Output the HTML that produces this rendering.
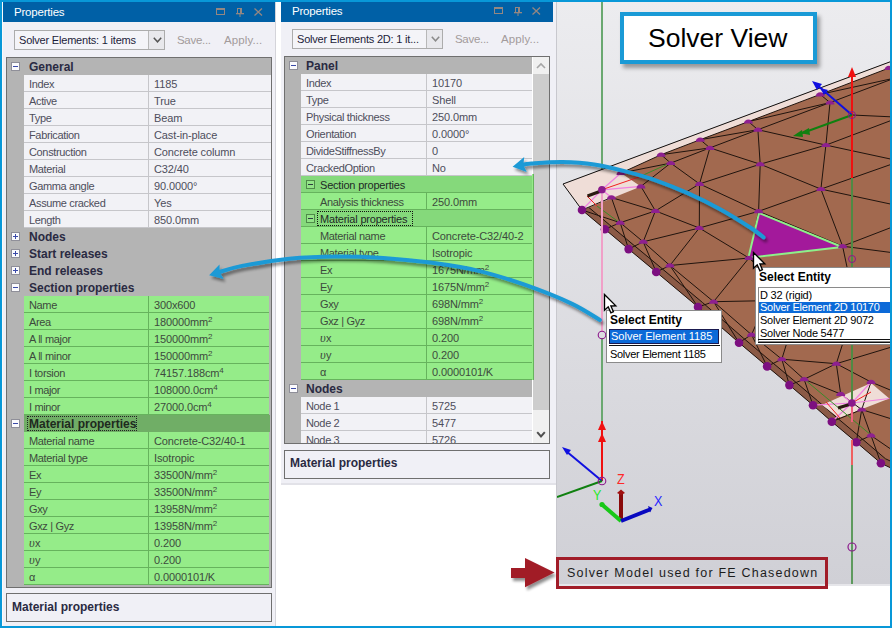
<!DOCTYPE html><html><head><meta charset="utf-8"><style>
*{margin:0;padding:0;box-sizing:border-box}
html,body{width:892px;height:628px;overflow:hidden;background:#0898d8;font-family:"Liberation Sans",sans-serif;font-size:11px}
div,span{position:absolute;white-space:nowrap}
.title{height:20px;background:#0060a6;color:#fff;font-size:11.5px;line-height:20px;letter-spacing:-0.2px}
.combo{height:20px;border:1px solid #acacac;background:#f4f4f8;color:#1c1c3a;line-height:18px;font-size:11px;letter-spacing:-0.2px;overflow:hidden}
.btn{top:0;width:16px;height:18px;border-left:1px solid #b8b8b8;background:#e8e8ec}
.tb{color:#a39b9b;font-size:11.5px;letter-spacing:-0.3px;line-height:13px}
.grid{border:1px solid #6f6f6f;background:#b4b4b4;overflow:hidden}
.hdr{font-weight:bold;color:#2a2a42;font-size:12px;line-height:17px;margin-top:1px}
.lbl{color:#4e4e5c;font-size:11px;letter-spacing:-0.35px;line-height:17px;margin-top:1px}
.glbl{color:#3d4a3d;font-size:11px;letter-spacing:-0.35px;line-height:17px;margin-top:1px}
.box{width:9px;height:9px;border:1px solid #8f8f99;background:#fbfbfd}
.box:after{content:"";position:absolute;left:1px;top:3px;width:5px;height:1px;background:#3a4aa8}
.box.plus:before{content:"";position:absolute;left:3px;top:1px;width:1px;height:5px;background:#3a4aa8}
.gbox{width:9px;height:9px;border:1px solid #4f8a4a;background:#92e487}
.gbox:after{content:"";position:absolute;left:1px;top:3px;width:5px;height:1px;background:#2c3c40}
.desc{border:1px solid #6f6f6f;background:#f0f0f6;font-weight:bold;color:#2a2a42;font-size:12px;line-height:14px}
.pop{background:#fff;border:1px solid #8a8a8a;color:#000}
sup{font-size:8px;vertical-align:0;position:relative;top:-4px}
</style></head><body>
<div style="left:2px;top:2px;width:274px;height:624px;background:#f0f0f6;border-left:1px solid #fafafa;border-right:1px solid #d4d4da"></div>
<div class="title" style="left:3px;top:2px;width:272px"><span style="left:11px;top:0">Properties</span></div>
<svg style="position:absolute;left:216px;top:7px" width="50" height="10" viewBox="0 0 50 10"><rect x="0.5" y="1.5" width="8" height="6" fill="none" stroke="#948782" stroke-width="1"/><rect x="0" y="1" width="9" height="2" fill="#948782"/><rect x="21.5" y="1.5" width="4" height="5" fill="none" stroke="#948782"/><rect x="24" y="1" width="1" height="5" fill="#948782"/><rect x="20" y="6" width="8" height="1.3" fill="#948782"/><rect x="23.5" y="7" width="1" height="3" fill="#948782"/><path d="M38.5 1.5 L46 8.5 M46 1.5 L38.5 8.5" stroke="#948782" stroke-width="1.3"/></svg>
<div class="combo" style="left:14px;top:30px;width:151px"><span style="left:4px;top:0">Solver Elements: 1 items</span><div class="btn" style="left:133px"><svg style="position:absolute;left:4px;top:6px" width="9" height="6"><path d="M0.8 0.8 L4.5 4.8 L8.2 0.8" fill="none" stroke="#555" stroke-width="1.5"/></svg></div></div>
<span class="tb" style="left:177px;top:34px">Save...</span>
<span class="tb" style="left:224px;top:34px;letter-spacing:0.1px">Apply...</span>
<div class="grid" style="left:6px;top:57px;width:266px;height:531px"></div>
<div style="left:0;top:0;width:892px;height:628px;overflow:hidden">
<div style="left:7px;top:58px;width:264px;height:529px;overflow:hidden">
<div class="box" style="left:4px;top:4px"></div>
<span class="hdr" style="left:22px;top:0px">General</span>
<div style="left:17px;top:17px;width:247px;height:17px;background:#f2f2f6;border-bottom:1px solid #c6c6ca"></div>
<div style="left:141px;top:17px;width:1px;height:17px;background:#c6c6ca"></div>
<span class="lbl" style="left:22px;top:17px">Index</span>
<span class="lbl" style="left:147px;top:17px;letter-spacing:-0.12px">1185</span>
<div style="left:17px;top:34px;width:247px;height:17px;background:#f2f2f6;border-bottom:1px solid #c6c6ca"></div>
<div style="left:141px;top:34px;width:1px;height:17px;background:#c6c6ca"></div>
<span class="lbl" style="left:22px;top:34px">Active</span>
<span class="lbl" style="left:147px;top:34px;letter-spacing:-0.12px">True</span>
<div style="left:17px;top:51px;width:247px;height:17px;background:#f2f2f6;border-bottom:1px solid #c6c6ca"></div>
<div style="left:141px;top:51px;width:1px;height:17px;background:#c6c6ca"></div>
<span class="lbl" style="left:22px;top:51px">Type</span>
<span class="lbl" style="left:147px;top:51px;letter-spacing:-0.12px">Beam</span>
<div style="left:17px;top:68px;width:247px;height:17px;background:#f2f2f6;border-bottom:1px solid #c6c6ca"></div>
<div style="left:141px;top:68px;width:1px;height:17px;background:#c6c6ca"></div>
<span class="lbl" style="left:22px;top:68px">Fabrication</span>
<span class="lbl" style="left:147px;top:68px;letter-spacing:-0.12px">Cast-in-place</span>
<div style="left:17px;top:85px;width:247px;height:17px;background:#f2f2f6;border-bottom:1px solid #c6c6ca"></div>
<div style="left:141px;top:85px;width:1px;height:17px;background:#c6c6ca"></div>
<span class="lbl" style="left:22px;top:85px">Construction</span>
<span class="lbl" style="left:147px;top:85px;letter-spacing:-0.12px">Concrete column</span>
<div style="left:17px;top:102px;width:247px;height:17px;background:#f2f2f6;border-bottom:1px solid #c6c6ca"></div>
<div style="left:141px;top:102px;width:1px;height:17px;background:#c6c6ca"></div>
<span class="lbl" style="left:22px;top:102px">Material</span>
<span class="lbl" style="left:147px;top:102px;letter-spacing:-0.12px">C32/40</span>
<div style="left:17px;top:119px;width:247px;height:17px;background:#f2f2f6;border-bottom:1px solid #c6c6ca"></div>
<div style="left:141px;top:119px;width:1px;height:17px;background:#c6c6ca"></div>
<span class="lbl" style="left:22px;top:119px">Gamma angle</span>
<span class="lbl" style="left:147px;top:119px;letter-spacing:-0.12px">90.0000°</span>
<div style="left:17px;top:136px;width:247px;height:17px;background:#f2f2f6;border-bottom:1px solid #c6c6ca"></div>
<div style="left:141px;top:136px;width:1px;height:17px;background:#c6c6ca"></div>
<span class="lbl" style="left:22px;top:136px">Assume cracked</span>
<span class="lbl" style="left:147px;top:136px;letter-spacing:-0.12px">Yes</span>
<div style="left:17px;top:153px;width:247px;height:17px;background:#f2f2f6;border-bottom:1px solid #c6c6ca"></div>
<div style="left:141px;top:153px;width:1px;height:17px;background:#c6c6ca"></div>
<span class="lbl" style="left:22px;top:153px">Length</span>
<span class="lbl" style="left:147px;top:153px;letter-spacing:-0.12px">850.0mm</span>
<div class="box plus" style="left:4px;top:174px"></div>
<span class="hdr" style="left:22px;top:170px">Nodes</span>
<div class="box plus" style="left:4px;top:191px"></div>
<span class="hdr" style="left:22px;top:187px">Start releases</span>
<div class="box plus" style="left:4px;top:208px"></div>
<span class="hdr" style="left:22px;top:204px">End releases</span>
<div class="box" style="left:4px;top:225px"></div>
<span class="hdr" style="left:22px;top:221px">Section properties</span>
<div style="left:17px;top:238px;width:245px;height:17px;background:#95ec89;border-bottom:1px solid #66b35d"></div>
<div style="left:141px;top:238px;width:1px;height:17px;background:#66b35d"></div>
<span class="glbl" style="left:22px;top:238px">Name</span>
<span class="glbl" style="left:147px;top:238px;letter-spacing:-0.12px">300x600</span>
<div style="left:17px;top:255px;width:245px;height:17px;background:#95ec89;border-bottom:1px solid #66b35d"></div>
<div style="left:141px;top:255px;width:1px;height:17px;background:#66b35d"></div>
<span class="glbl" style="left:22px;top:255px">Area</span>
<span class="glbl" style="left:147px;top:255px;letter-spacing:-0.12px">180000mm<sup>2</sup></span>
<div style="left:17px;top:272px;width:245px;height:17px;background:#95ec89;border-bottom:1px solid #66b35d"></div>
<div style="left:141px;top:272px;width:1px;height:17px;background:#66b35d"></div>
<span class="glbl" style="left:22px;top:272px">A ǁ major</span>
<span class="glbl" style="left:147px;top:272px;letter-spacing:-0.12px">150000mm<sup>2</sup></span>
<div style="left:17px;top:289px;width:245px;height:17px;background:#95ec89;border-bottom:1px solid #66b35d"></div>
<div style="left:141px;top:289px;width:1px;height:17px;background:#66b35d"></div>
<span class="glbl" style="left:22px;top:289px">A ǁ minor</span>
<span class="glbl" style="left:147px;top:289px;letter-spacing:-0.12px">150000mm<sup>2</sup></span>
<div style="left:17px;top:306px;width:245px;height:17px;background:#95ec89;border-bottom:1px solid #66b35d"></div>
<div style="left:141px;top:306px;width:1px;height:17px;background:#66b35d"></div>
<span class="glbl" style="left:22px;top:306px">I torsion</span>
<span class="glbl" style="left:147px;top:306px;letter-spacing:-0.12px">74157.188cm<sup>4</sup></span>
<div style="left:17px;top:323px;width:245px;height:17px;background:#95ec89;border-bottom:1px solid #66b35d"></div>
<div style="left:141px;top:323px;width:1px;height:17px;background:#66b35d"></div>
<span class="glbl" style="left:22px;top:323px">I major</span>
<span class="glbl" style="left:147px;top:323px;letter-spacing:-0.12px">108000.0cm<sup>4</sup></span>
<div style="left:17px;top:340px;width:245px;height:17px;background:#95ec89;border-bottom:1px solid #66b35d"></div>
<div style="left:141px;top:340px;width:1px;height:17px;background:#66b35d"></div>
<span class="glbl" style="left:22px;top:340px">I minor</span>
<span class="glbl" style="left:147px;top:340px;letter-spacing:-0.12px">27000.0cm<sup>4</sup></span>
<div style="left:17px;top:357px;width:246px;height:17px;background:#70ae66"></div>
<div class="box" style="left:4px;top:361px"></div>
<div style="left:20px;top:358px;width:110px;height:15px;border:1px dotted #222"></div>
<span class="hdr" style="left:22px;top:357px;color:#1e2a1e">Material properties</span>
<div style="left:17px;top:374px;width:245px;height:17px;background:#95ec89;border-bottom:1px solid #66b35d"></div>
<div style="left:141px;top:374px;width:1px;height:17px;background:#66b35d"></div>
<span class="glbl" style="left:22px;top:374px">Material name</span>
<span class="glbl" style="left:147px;top:374px;letter-spacing:-0.12px">Concrete-C32/40-1</span>
<div style="left:17px;top:391px;width:245px;height:17px;background:#95ec89;border-bottom:1px solid #66b35d"></div>
<div style="left:141px;top:391px;width:1px;height:17px;background:#66b35d"></div>
<span class="glbl" style="left:22px;top:391px">Material type</span>
<span class="glbl" style="left:147px;top:391px;letter-spacing:-0.12px">Isotropic</span>
<div style="left:17px;top:408px;width:245px;height:17px;background:#95ec89;border-bottom:1px solid #66b35d"></div>
<div style="left:141px;top:408px;width:1px;height:17px;background:#66b35d"></div>
<span class="glbl" style="left:22px;top:408px">Ex</span>
<span class="glbl" style="left:147px;top:408px;letter-spacing:-0.12px">33500N/mm<sup>2</sup></span>
<div style="left:17px;top:425px;width:245px;height:17px;background:#95ec89;border-bottom:1px solid #66b35d"></div>
<div style="left:141px;top:425px;width:1px;height:17px;background:#66b35d"></div>
<span class="glbl" style="left:22px;top:425px">Ey</span>
<span class="glbl" style="left:147px;top:425px;letter-spacing:-0.12px">33500N/mm<sup>2</sup></span>
<div style="left:17px;top:442px;width:245px;height:17px;background:#95ec89;border-bottom:1px solid #66b35d"></div>
<div style="left:141px;top:442px;width:1px;height:17px;background:#66b35d"></div>
<span class="glbl" style="left:22px;top:442px">Gxy</span>
<span class="glbl" style="left:147px;top:442px;letter-spacing:-0.12px">13958N/mm<sup>2</sup></span>
<div style="left:17px;top:459px;width:245px;height:17px;background:#95ec89;border-bottom:1px solid #66b35d"></div>
<div style="left:141px;top:459px;width:1px;height:17px;background:#66b35d"></div>
<span class="glbl" style="left:22px;top:459px">Gxz | Gyz</span>
<span class="glbl" style="left:147px;top:459px;letter-spacing:-0.12px">13958N/mm<sup>2</sup></span>
<div style="left:17px;top:476px;width:245px;height:17px;background:#95ec89;border-bottom:1px solid #66b35d"></div>
<div style="left:141px;top:476px;width:1px;height:17px;background:#66b35d"></div>
<span class="glbl" style="left:22px;top:476px"><i style="font-family:'Liberation Serif',serif;font-size:12.5px;letter-spacing:0.3px">υ</i>x</span>
<span class="glbl" style="left:147px;top:476px;letter-spacing:-0.12px">0.200</span>
<div style="left:17px;top:493px;width:245px;height:17px;background:#95ec89;border-bottom:1px solid #66b35d"></div>
<div style="left:141px;top:493px;width:1px;height:17px;background:#66b35d"></div>
<span class="glbl" style="left:22px;top:493px"><i style="font-family:'Liberation Serif',serif;font-size:12.5px;letter-spacing:0.3px">υ</i>y</span>
<span class="glbl" style="left:147px;top:493px;letter-spacing:-0.12px">0.200</span>
<div style="left:17px;top:510px;width:245px;height:17px;background:#95ec89;border-bottom:1px solid #66b35d"></div>
<div style="left:141px;top:510px;width:1px;height:17px;background:#66b35d"></div>
<span class="glbl" style="left:22px;top:510px">α</span>
<span class="glbl" style="left:147px;top:510px;letter-spacing:-0.12px">0.0000101/K</span>
</div></div>
<div class="desc" style="left:6px;top:593px;width:266px;height:29px"><span style="left:5px;top:6px">Material properties</span></div>
<div style="left:276px;top:2px;width:5px;height:624px;background:#fff"></div>
<div style="left:281px;top:2px;width:276px;height:483px;background:#f0f0f6;border-right:1px solid #d4d4da;border-bottom:2px solid #e2e2e8"></div>
<div style="left:281px;top:485px;width:276px;height:141px;background:#fff"></div>
<div class="title" style="left:281px;top:2px;width:272px"><span style="left:11px;top:-1px">Properties</span></div>
<svg style="position:absolute;left:494px;top:6px" width="50" height="10" viewBox="0 0 50 10"><rect x="0.5" y="1.5" width="8" height="6" fill="none" stroke="#948782" stroke-width="1"/><rect x="0" y="1" width="9" height="2" fill="#948782"/><rect x="21.5" y="1.5" width="4" height="5" fill="none" stroke="#948782"/><rect x="24" y="1" width="1" height="5" fill="#948782"/><rect x="20" y="6" width="8" height="1.3" fill="#948782"/><rect x="23.5" y="7" width="1" height="3" fill="#948782"/><path d="M38.5 1.5 L46 8.5 M46 1.5 L38.5 8.5" stroke="#948782" stroke-width="1.3"/></svg>
<div class="combo" style="left:292px;top:29px;width:151px"><span style="left:4px;top:0">Solver Elements 2D: 1 it...</span><div class="btn" style="left:133px"><svg style="position:absolute;left:4px;top:6px" width="9" height="6"><path d="M0.8 0.8 L4.5 4.8 L8.2 0.8" fill="none" stroke="#8a8a8a" stroke-width="1.5"/></svg></div></div>
<span class="tb" style="left:455px;top:33px">Save...</span>
<span class="tb" style="left:501px;top:33px;letter-spacing:0.1px">Apply...</span>
<div class="grid" style="left:284px;top:56px;width:266px;height:388px"></div>
<div style="left:285px;top:57px;width:247px;height:386px;overflow:hidden">
<div class="box" style="left:4px;top:4px"></div>
<span class="hdr" style="left:21px;top:0px">Panel</span>
<div style="left:16px;top:17px;width:231px;height:17px;background:#f2f2f6;border-bottom:1px solid #c6c6ca"></div>
<div style="left:141px;top:17px;width:1px;height:17px;background:#c6c6ca"></div>
<span class="lbl" style="left:21px;top:17px">Index</span>
<span class="lbl" style="left:147px;top:17px;letter-spacing:-0.12px">10170</span>
<div style="left:16px;top:34px;width:231px;height:17px;background:#f2f2f6;border-bottom:1px solid #c6c6ca"></div>
<div style="left:141px;top:34px;width:1px;height:17px;background:#c6c6ca"></div>
<span class="lbl" style="left:21px;top:34px">Type</span>
<span class="lbl" style="left:147px;top:34px;letter-spacing:-0.12px">Shell</span>
<div style="left:16px;top:51px;width:231px;height:17px;background:#f2f2f6;border-bottom:1px solid #c6c6ca"></div>
<div style="left:141px;top:51px;width:1px;height:17px;background:#c6c6ca"></div>
<span class="lbl" style="left:21px;top:51px">Physical thickness</span>
<span class="lbl" style="left:147px;top:51px;letter-spacing:-0.12px">250.0mm</span>
<div style="left:16px;top:68px;width:231px;height:17px;background:#f2f2f6;border-bottom:1px solid #c6c6ca"></div>
<div style="left:141px;top:68px;width:1px;height:17px;background:#c6c6ca"></div>
<span class="lbl" style="left:21px;top:68px">Orientation</span>
<span class="lbl" style="left:147px;top:68px;letter-spacing:-0.12px">0.0000°</span>
<div style="left:16px;top:85px;width:231px;height:17px;background:#f2f2f6;border-bottom:1px solid #c6c6ca"></div>
<div style="left:141px;top:85px;width:1px;height:17px;background:#c6c6ca"></div>
<span class="lbl" style="left:21px;top:85px">DivideStiffnessBy</span>
<span class="lbl" style="left:147px;top:85px;letter-spacing:-0.12px">0</span>
<div style="left:16px;top:102px;width:231px;height:17px;background:#f2f2f6;border-bottom:1px solid #c6c6ca"></div>
<div style="left:141px;top:102px;width:1px;height:17px;background:#c6c6ca"></div>
<span class="lbl" style="left:21px;top:102px">CrackedOption</span>
<span class="lbl" style="left:147px;top:102px;letter-spacing:-0.12px">No</span>
<div style="left:16px;top:119px;width:231px;height:17px;background:#85d97b;border-bottom:1px solid #66b35d"></div>
<div class="gbox" style="left:21px;top:123px"></div>
<span class="glbl" style="left:35px;top:119px;color:#1e2a26;letter-spacing:-0.2px">Section properties</span>
<div style="left:16px;top:136px;width:231px;height:17px;background:#95ec89;border-bottom:1px solid #66b35d"></div>
<div style="left:141px;top:136px;width:1px;height:17px;background:#66b35d"></div>
<span class="glbl" style="left:35px;top:136px">Analysis thickness</span>
<span class="glbl" style="left:147px;top:136px;letter-spacing:-0.12px">250.0mm</span>
<div style="left:16px;top:153px;width:231px;height:17px;background:#85d97b;border-bottom:1px solid #66b35d"></div>
<div class="gbox" style="left:21px;top:157px"></div>
<div style="left:32px;top:154px;width:96px;height:15px;border:1px dotted #111"></div>
<span class="glbl" style="left:35px;top:153px;color:#1e2a26;letter-spacing:-0.2px">Material properties</span>
<div style="left:16px;top:170px;width:231px;height:17px;background:#95ec89;border-bottom:1px solid #66b35d"></div>
<div style="left:141px;top:170px;width:1px;height:17px;background:#66b35d"></div>
<span class="glbl" style="left:35px;top:170px">Material name</span>
<span class="glbl" style="left:147px;top:170px;letter-spacing:-0.12px">Concrete-C32/40-2</span>
<div style="left:16px;top:187px;width:231px;height:17px;background:#95ec89;border-bottom:1px solid #66b35d"></div>
<div style="left:141px;top:187px;width:1px;height:17px;background:#66b35d"></div>
<span class="glbl" style="left:35px;top:187px">Material type</span>
<span class="glbl" style="left:147px;top:187px;letter-spacing:-0.12px">Isotropic</span>
<div style="left:16px;top:204px;width:231px;height:17px;background:#95ec89;border-bottom:1px solid #66b35d"></div>
<div style="left:141px;top:204px;width:1px;height:17px;background:#66b35d"></div>
<span class="glbl" style="left:35px;top:204px">Ex</span>
<span class="glbl" style="left:147px;top:204px;letter-spacing:-0.12px">1675N/mm<sup>2</sup></span>
<div style="left:16px;top:221px;width:231px;height:17px;background:#95ec89;border-bottom:1px solid #66b35d"></div>
<div style="left:141px;top:221px;width:1px;height:17px;background:#66b35d"></div>
<span class="glbl" style="left:35px;top:221px">Ey</span>
<span class="glbl" style="left:147px;top:221px;letter-spacing:-0.12px">1675N/mm<sup>2</sup></span>
<div style="left:16px;top:238px;width:231px;height:17px;background:#95ec89;border-bottom:1px solid #66b35d"></div>
<div style="left:141px;top:238px;width:1px;height:17px;background:#66b35d"></div>
<span class="glbl" style="left:35px;top:238px">Gxy</span>
<span class="glbl" style="left:147px;top:238px;letter-spacing:-0.12px">698N/mm<sup>2</sup></span>
<div style="left:16px;top:255px;width:231px;height:17px;background:#95ec89;border-bottom:1px solid #66b35d"></div>
<div style="left:141px;top:255px;width:1px;height:17px;background:#66b35d"></div>
<span class="glbl" style="left:35px;top:255px">Gxz | Gyz</span>
<span class="glbl" style="left:147px;top:255px;letter-spacing:-0.12px">698N/mm<sup>2</sup></span>
<div style="left:16px;top:272px;width:231px;height:17px;background:#95ec89;border-bottom:1px solid #66b35d"></div>
<div style="left:141px;top:272px;width:1px;height:17px;background:#66b35d"></div>
<span class="glbl" style="left:35px;top:272px"><i style="font-family:'Liberation Serif',serif;font-size:12.5px;letter-spacing:0.3px">υ</i>x</span>
<span class="glbl" style="left:147px;top:272px;letter-spacing:-0.12px">0.200</span>
<div style="left:16px;top:289px;width:231px;height:17px;background:#95ec89;border-bottom:1px solid #66b35d"></div>
<div style="left:141px;top:289px;width:1px;height:17px;background:#66b35d"></div>
<span class="glbl" style="left:35px;top:289px"><i style="font-family:'Liberation Serif',serif;font-size:12.5px;letter-spacing:0.3px">υ</i>y</span>
<span class="glbl" style="left:147px;top:289px;letter-spacing:-0.12px">0.200</span>
<div style="left:16px;top:306px;width:231px;height:17px;background:#95ec89;border-bottom:1px solid #66b35d"></div>
<div style="left:141px;top:306px;width:1px;height:17px;background:#66b35d"></div>
<span class="glbl" style="left:35px;top:306px">α</span>
<span class="glbl" style="left:147px;top:306px;letter-spacing:-0.12px">0.0000101/K</span>
<div class="box" style="left:4px;top:327px"></div>
<span class="hdr" style="left:21px;top:323px">Nodes</span>
<div style="left:16px;top:340px;width:231px;height:17px;background:#f2f2f6;border-bottom:1px solid #c6c6ca"></div>
<div style="left:141px;top:340px;width:1px;height:17px;background:#c6c6ca"></div>
<span class="lbl" style="left:21px;top:340px">Node 1</span>
<span class="lbl" style="left:147px;top:340px;letter-spacing:-0.12px">5725</span>
<div style="left:16px;top:357px;width:231px;height:17px;background:#f2f2f6;border-bottom:1px solid #c6c6ca"></div>
<div style="left:141px;top:357px;width:1px;height:17px;background:#c6c6ca"></div>
<span class="lbl" style="left:21px;top:357px">Node 2</span>
<span class="lbl" style="left:147px;top:357px;letter-spacing:-0.12px">5477</span>
<div style="left:16px;top:374px;width:231px;height:17px;background:#f2f2f6;border-bottom:1px solid #c6c6ca"></div>
<div style="left:141px;top:374px;width:1px;height:17px;background:#c6c6ca"></div>
<span class="lbl" style="left:21px;top:374px">Node 3</span>
<span class="lbl" style="left:147px;top:374px;letter-spacing:-0.12px">5726</span>
</div>
<div style="left:532px;top:57px;width:17px;height:386px;background:#cdcdcd;border-left:1px solid #fff"></div>
<div style="left:533px;top:57px;width:16px;height:17px;background:#f0f0f0"></div>
<div style="left:533px;top:410px;width:16px;height:33px;background:#f0f0f0"></div>
<svg style="position:absolute;left:536px;top:62px" width="10" height="7"><path d="M1 6 L5 2 L9 6" fill="none" stroke="#a6a6a6" stroke-width="1.6"/></svg>
<svg style="position:absolute;left:536px;top:431px" width="10" height="8"><path d="M1.2 1.2 L5 5.5 L8.8 1.2" fill="none" stroke="#505050" stroke-width="2"/></svg>
<div style="left:532px;top:174px;width:2px;height:206px;background:#95ec89;border-right:1px solid #66b35d"></div>
<div class="desc" style="left:284px;top:450px;width:266px;height:29px"><span style="left:5px;top:5px">Material properties</span></div>
<div style="left:557px;top:2px;width:333px;height:624px;background:#fff"></div>
<div style="left:556px;top:2px;width:1px;height:582px;background:#c8c8ce"></div>
<div style="left:557px;top:2px;width:333px;height:582px;background:linear-gradient(#ececef,#d0d0d6)"></div>
<div style="left:557px;top:584px;width:333px;height:2px;background:#e6e6ea"></div>
<svg style="position:absolute;left:0;top:0" width="892" height="628" viewBox="0 0 892 628">
<defs><clipPath id="vc"><rect x="557" y="2" width="333" height="582"/></clipPath></defs>
<g clip-path="url(#vc)">
<line x1="602" y1="2" x2="602" y2="170" stroke="#6aa870" stroke-width="2"/>
<line x1="852" y1="465" x2="852" y2="584" stroke="#5e9a5e" stroke-width="2"/>
<polygon points="563.0,184.0 895.0,60.0 895.0,470.0 880.9,463.2 856.3,442.2 831.8,421.7 813.0,405.2 789.4,385.1 767.1,366.4 739.0,342.7 698.0,307.0 656.2,272.0 628.6,249.1 604.9,229.2 582.0,210.0" fill="#a2694f"/>
<polygon points="582.0,210.0 604.9,229.2 628.6,249.1 656.2,272.0 698.0,307.0 739.0,342.7 767.1,366.4 789.4,385.1 813.0,405.2 831.8,421.7 856.3,442.2 880.9,463.2 895.0,470.0 899.5,465.5 885.4,458.7 860.8,437.7 836.3,417.2 817.5,400.7 793.9,380.6 771.6,361.9 743.5,338.2 702.5,302.5 660.7,267.5 633.1,244.6 609.4,224.7 586.5,205.5" fill="#8b5a46"/>
<polyline points="586.5,205.5 609.4,224.7 633.1,244.6 660.7,267.5 702.5,302.5 743.5,338.2 771.6,361.9 793.9,380.6 817.5,400.7 836.3,417.2 860.8,437.7 885.4,458.7 899.5,465.5" fill="none" stroke="#1e120c" stroke-width="1"/>
<polygon points="563.0,184.0 895.0,60.0 895.0,66.0 889.0,68.0 820.2,94.4 748.4,121.6 700.2,139.7 661.1,154.7 621.0,173.0 640.9,186.4 590.0,207.0 582.0,210.0" fill="#efddd7"/>
<line x1="563" y1="184" x2="895" y2="60" stroke="#111" stroke-width="1"/>
<line x1="563" y1="184" x2="582" y2="210" stroke="#111" stroke-width="1"/>
<polygon points="822,405 871,383 889.3,398.5 839,418" fill="#efddd7"/>
<line x1="621.0" y1="173.0" x2="661.1" y2="154.7" stroke="#20140e" stroke-width="1"/>
<line x1="661.1" y1="154.7" x2="700.2" y2="139.7" stroke="#20140e" stroke-width="1"/>
<line x1="700.2" y1="139.7" x2="748.4" y2="121.6" stroke="#20140e" stroke-width="1"/>
<line x1="748.4" y1="121.6" x2="820.2" y2="94.4" stroke="#20140e" stroke-width="1"/>
<line x1="820.2" y1="94.4" x2="889.0" y2="68.0" stroke="#20140e" stroke-width="1"/>
<line x1="889.0" y1="68.0" x2="895.0" y2="59.0" stroke="#20140e" stroke-width="1"/>
<line x1="670.7" y1="163.1" x2="709.9" y2="147.9" stroke="#20140e" stroke-width="1"/>
<line x1="709.9" y1="147.9" x2="757.9" y2="129.7" stroke="#20140e" stroke-width="1"/>
<line x1="757.9" y1="129.7" x2="830.0" y2="102.6" stroke="#20140e" stroke-width="1"/>
<line x1="830.0" y1="102.6" x2="895.0" y2="78.0" stroke="#20140e" stroke-width="1"/>
<line x1="661.1" y1="154.7" x2="670.7" y2="163.1" stroke="#20140e" stroke-width="1"/>
<line x1="700.2" y1="139.7" x2="709.9" y2="147.9" stroke="#20140e" stroke-width="1"/>
<line x1="748.4" y1="121.6" x2="757.9" y2="129.7" stroke="#20140e" stroke-width="1"/>
<line x1="820.2" y1="94.4" x2="830.0" y2="102.6" stroke="#20140e" stroke-width="1"/>
<line x1="640.9" y1="186.4" x2="670.7" y2="163.1" stroke="#20140e" stroke-width="1"/>
<line x1="640.9" y1="186.4" x2="655.4" y2="210.9" stroke="#20140e" stroke-width="1"/>
<line x1="611.4" y1="197.5" x2="655.4" y2="210.9" stroke="#20140e" stroke-width="1"/>
<line x1="611.4" y1="197.5" x2="620.2" y2="222.7" stroke="#20140e" stroke-width="1"/>
<line x1="670.7" y1="163.1" x2="699.5" y2="183.9" stroke="#20140e" stroke-width="1"/>
<line x1="709.9" y1="147.9" x2="699.5" y2="183.9" stroke="#20140e" stroke-width="1"/>
<line x1="709.9" y1="147.9" x2="760.2" y2="164.2" stroke="#20140e" stroke-width="1"/>
<line x1="757.9" y1="129.7" x2="760.2" y2="164.2" stroke="#20140e" stroke-width="1"/>
<line x1="757.9" y1="129.7" x2="825.9" y2="145.1" stroke="#20140e" stroke-width="1"/>
<line x1="830.0" y1="102.6" x2="825.9" y2="145.1" stroke="#20140e" stroke-width="1"/>
<line x1="825.9" y1="145.1" x2="895.0" y2="119.0" stroke="#20140e" stroke-width="1"/>
<line x1="825.9" y1="145.1" x2="895.0" y2="160.0" stroke="#20140e" stroke-width="1"/>
<line x1="825.9" y1="145.1" x2="820.9" y2="189.1" stroke="#20140e" stroke-width="1"/>
<line x1="760.2" y1="164.2" x2="825.9" y2="145.1" stroke="#20140e" stroke-width="1"/>
<line x1="760.2" y1="164.2" x2="699.5" y2="183.9" stroke="#20140e" stroke-width="1"/>
<line x1="760.2" y1="164.2" x2="758.6" y2="211.3" stroke="#20140e" stroke-width="1"/>
<line x1="760.2" y1="164.2" x2="820.9" y2="189.1" stroke="#20140e" stroke-width="1"/>
<line x1="699.5" y1="183.9" x2="758.6" y2="211.3" stroke="#20140e" stroke-width="1"/>
<line x1="699.5" y1="183.9" x2="655.4" y2="210.9" stroke="#20140e" stroke-width="1"/>
<line x1="699.5" y1="183.9" x2="699.3" y2="228.0" stroke="#20140e" stroke-width="1"/>
<line x1="820.9" y1="189.1" x2="758.6" y2="211.3" stroke="#20140e" stroke-width="1"/>
<line x1="820.9" y1="189.1" x2="895.0" y2="163.0" stroke="#20140e" stroke-width="1"/>
<line x1="820.9" y1="189.1" x2="895.0" y2="205.0" stroke="#20140e" stroke-width="1"/>
<line x1="820.9" y1="189.1" x2="842.6" y2="246.2" stroke="#20140e" stroke-width="1"/>
<line x1="758.6" y1="211.3" x2="699.3" y2="228.0" stroke="#20140e" stroke-width="1"/>
<line x1="758.6" y1="211.3" x2="842.6" y2="246.2" stroke="#20140e" stroke-width="1"/>
<line x1="758.6" y1="211.3" x2="749.0" y2="258.0" stroke="#20140e" stroke-width="1"/>
<line x1="842.6" y1="246.2" x2="749.0" y2="258.0" stroke="#20140e" stroke-width="1"/>
<line x1="842.6" y1="246.2" x2="895.0" y2="226.0" stroke="#20140e" stroke-width="1"/>
<line x1="842.6" y1="246.2" x2="895.0" y2="253.0" stroke="#20140e" stroke-width="1"/>
<line x1="842.6" y1="246.2" x2="855.0" y2="305.0" stroke="#20140e" stroke-width="1"/>
<line x1="749.0" y1="258.0" x2="775.0" y2="282.0" stroke="#20140e" stroke-width="1"/>
<line x1="749.0" y1="258.0" x2="800.0" y2="300.0" stroke="#20140e" stroke-width="1"/>
<line x1="655.4" y1="210.9" x2="620.2" y2="222.7" stroke="#20140e" stroke-width="1"/>
<line x1="655.4" y1="210.9" x2="699.3" y2="228.0" stroke="#20140e" stroke-width="1"/>
<line x1="655.4" y1="210.9" x2="643.2" y2="241.8" stroke="#20140e" stroke-width="1"/>
<line x1="620.2" y1="222.7" x2="643.2" y2="241.8" stroke="#20140e" stroke-width="1"/>
<line x1="699.3" y1="228.0" x2="643.2" y2="241.8" stroke="#20140e" stroke-width="1"/>
<line x1="699.3" y1="228.0" x2="669.9" y2="265.5" stroke="#20140e" stroke-width="1"/>
<line x1="699.3" y1="228.0" x2="749.0" y2="258.0" stroke="#20140e" stroke-width="1"/>
<line x1="643.2" y1="241.8" x2="669.9" y2="265.5" stroke="#20140e" stroke-width="1"/>
<line x1="669.9" y1="265.5" x2="749.0" y2="258.0" stroke="#20140e" stroke-width="1"/>
<line x1="669.9" y1="265.5" x2="713.6" y2="301.7" stroke="#20140e" stroke-width="1"/>
<line x1="713.6" y1="301.7" x2="749.0" y2="258.0" stroke="#20140e" stroke-width="1"/>
<line x1="713.6" y1="301.7" x2="800.0" y2="300.0" stroke="#20140e" stroke-width="1"/>
<line x1="713.6" y1="301.7" x2="751.5" y2="334.7" stroke="#20140e" stroke-width="1"/>
<line x1="751.5" y1="334.7" x2="775.0" y2="282.0" stroke="#20140e" stroke-width="1"/>
<line x1="751.5" y1="334.7" x2="781.8" y2="359.2" stroke="#20140e" stroke-width="1"/>
<line x1="781.8" y1="359.2" x2="800.0" y2="300.0" stroke="#20140e" stroke-width="1"/>
<line x1="781.8" y1="359.2" x2="836.3" y2="363.7" stroke="#20140e" stroke-width="1"/>
<line x1="781.8" y1="359.2" x2="804.1" y2="379.3" stroke="#20140e" stroke-width="1"/>
<line x1="836.3" y1="363.7" x2="804.1" y2="379.3" stroke="#20140e" stroke-width="1"/>
<line x1="836.3" y1="363.7" x2="840.7" y2="394.0" stroke="#20140e" stroke-width="1"/>
<line x1="836.3" y1="363.7" x2="871.0" y2="382.0" stroke="#20140e" stroke-width="1"/>
<line x1="836.3" y1="363.7" x2="895.0" y2="346.0" stroke="#20140e" stroke-width="1"/>
<line x1="836.3" y1="363.7" x2="855.0" y2="305.0" stroke="#20140e" stroke-width="1"/>
<line x1="804.1" y1="379.3" x2="840.7" y2="394.0" stroke="#20140e" stroke-width="1"/>
<line x1="871.0" y1="382.0" x2="895.0" y2="392.0" stroke="#20140e" stroke-width="1"/>
<line x1="871.0" y1="382.0" x2="861.7" y2="409.6" stroke="#20140e" stroke-width="1"/>
<line x1="840.7" y1="394.0" x2="861.7" y2="409.6" stroke="#20140e" stroke-width="1"/>
<line x1="861.7" y1="409.6" x2="895.0" y2="420.0" stroke="#20140e" stroke-width="1"/>
<line x1="861.7" y1="409.6" x2="871.0" y2="435.5" stroke="#20140e" stroke-width="1"/>
<line x1="871.0" y1="435.5" x2="895.0" y2="452.0" stroke="#20140e" stroke-width="1"/>
<line x1="855.0" y1="305.0" x2="895.0" y2="300.0" stroke="#20140e" stroke-width="1"/>
<line x1="800.0" y1="300.0" x2="855.0" y2="305.0" stroke="#20140e" stroke-width="1"/>
<line x1="775.0" y1="282.0" x2="800.0" y2="300.0" stroke="#20140e" stroke-width="1"/>
<line x1="582.0" y1="210.0" x2="604.9" y2="229.2" stroke="#20140e" stroke-width="1"/>
<line x1="604.9" y1="229.2" x2="628.6" y2="249.1" stroke="#20140e" stroke-width="1"/>
<line x1="628.6" y1="249.1" x2="656.2" y2="272.0" stroke="#20140e" stroke-width="1"/>
<line x1="656.2" y1="272.0" x2="698.0" y2="307.0" stroke="#20140e" stroke-width="1"/>
<line x1="698.0" y1="307.0" x2="739.0" y2="342.7" stroke="#20140e" stroke-width="1"/>
<line x1="739.0" y1="342.7" x2="767.1" y2="366.4" stroke="#20140e" stroke-width="1"/>
<line x1="767.1" y1="366.4" x2="789.4" y2="385.1" stroke="#20140e" stroke-width="1"/>
<line x1="789.4" y1="385.1" x2="813.0" y2="405.2" stroke="#20140e" stroke-width="1"/>
<line x1="813.0" y1="405.2" x2="831.8" y2="421.7" stroke="#20140e" stroke-width="1"/>
<line x1="831.8" y1="421.7" x2="856.3" y2="442.2" stroke="#20140e" stroke-width="1"/>
<line x1="856.3" y1="442.2" x2="880.9" y2="463.2" stroke="#20140e" stroke-width="1"/>
<line x1="880.9" y1="463.2" x2="895.0" y2="470.0" stroke="#20140e" stroke-width="1"/>
<line x1="604.9" y1="229.2" x2="620.2" y2="222.7" stroke="#20140e" stroke-width="1"/>
<line x1="620.2" y1="222.7" x2="628.6" y2="249.1" stroke="#20140e" stroke-width="1"/>
<line x1="628.6" y1="249.1" x2="643.2" y2="241.8" stroke="#20140e" stroke-width="1"/>
<line x1="643.2" y1="241.8" x2="656.2" y2="272.0" stroke="#20140e" stroke-width="1"/>
<line x1="656.2" y1="272.0" x2="669.9" y2="265.5" stroke="#20140e" stroke-width="1"/>
<line x1="669.9" y1="265.5" x2="698.0" y2="307.0" stroke="#20140e" stroke-width="1"/>
<line x1="698.0" y1="307.0" x2="713.6" y2="301.7" stroke="#20140e" stroke-width="1"/>
<line x1="713.6" y1="301.7" x2="739.0" y2="342.7" stroke="#20140e" stroke-width="1"/>
<line x1="739.0" y1="342.7" x2="751.5" y2="334.7" stroke="#20140e" stroke-width="1"/>
<line x1="751.5" y1="334.7" x2="767.1" y2="366.4" stroke="#20140e" stroke-width="1"/>
<line x1="767.1" y1="366.4" x2="781.8" y2="359.2" stroke="#20140e" stroke-width="1"/>
<line x1="781.8" y1="359.2" x2="789.4" y2="385.1" stroke="#20140e" stroke-width="1"/>
<line x1="789.4" y1="385.1" x2="804.1" y2="379.3" stroke="#20140e" stroke-width="1"/>
<line x1="804.1" y1="379.3" x2="813.0" y2="405.2" stroke="#20140e" stroke-width="1"/>
<line x1="831.8" y1="421.7" x2="861.7" y2="409.6" stroke="#20140e" stroke-width="1"/>
<line x1="861.7" y1="409.6" x2="856.3" y2="442.2" stroke="#20140e" stroke-width="1"/>
<line x1="856.3" y1="442.2" x2="871.0" y2="435.5" stroke="#20140e" stroke-width="1"/>
<line x1="871.0" y1="435.5" x2="880.9" y2="463.2" stroke="#20140e" stroke-width="1"/>
<line x1="582.0" y1="210.0" x2="620.2" y2="222.7" stroke="#20140e" stroke-width="1"/>
<line x1="582.0" y1="210.0" x2="611.4" y2="197.5" stroke="#20140e" stroke-width="1"/>
<line x1="852.0" y1="115.0" x2="895.0" y2="117.0" stroke="#20140e" stroke-width="1"/>
<line x1="661.1" y1="154.7" x2="709.9" y2="147.9" stroke="#20140e" stroke-width="1"/>
<line x1="700.2" y1="139.7" x2="757.9" y2="129.7" stroke="#20140e" stroke-width="1"/>
<line x1="748.4" y1="121.6" x2="830.0" y2="102.6" stroke="#20140e" stroke-width="1"/>
<line x1="621.0" y1="173.0" x2="670.7" y2="163.1" stroke="#20140e" stroke-width="1"/>
<line x1="820.2" y1="94.4" x2="895.0" y2="78.0" stroke="#20140e" stroke-width="1"/>
<line x1="601.9" y1="189.8" x2="621" y2="173" stroke="#f080e0" stroke-width="1.2"/>
<line x1="601.9" y1="189.8" x2="640.9" y2="186.4" stroke="#f080e0" stroke-width="1.2"/>
<line x1="601.9" y1="189.8" x2="582" y2="210" stroke="#f080e0" stroke-width="1.2"/>
<line x1="601.9" y1="189.8" x2="611.4" y2="197.5" stroke="#f080e0" stroke-width="1.2"/>
<line x1="601" y1="190" x2="639" y2="177" stroke="#f02020" stroke-width="1"/>
<line x1="587" y1="196" x2="597" y2="206" stroke="#f02020" stroke-width="1"/>
<line x1="639" y1="177" x2="670" y2="163" stroke="#3a8a2a" stroke-width="1"/>
<line x1="597" y1="206" x2="620" y2="223" stroke="#3a8a2a" stroke-width="1"/>
<line x1="587.5" y1="196" x2="601" y2="191" stroke="#2a1a10" stroke-width="3"/>
<line x1="851.9" y1="403" x2="840.7" y2="394" stroke="#f080e0" stroke-width="1.2"/>
<line x1="851.9" y1="403" x2="871" y2="382" stroke="#f080e0" stroke-width="1.2"/>
<line x1="851.9" y1="403" x2="831.8" y2="421.7" stroke="#f080e0" stroke-width="1.2"/>
<line x1="851.9" y1="403" x2="889.3" y2="398.5" stroke="#f080e0" stroke-width="1.2"/>
<line x1="851.9" y1="403" x2="813" y2="405.2" stroke="#f080e0" stroke-width="1.2"/>
<line x1="851.9" y1="403" x2="871" y2="392" stroke="#f02020" stroke-width="1"/>
<line x1="826" y1="402" x2="840" y2="418" stroke="#f02020" stroke-width="1"/>
<line x1="804" y1="379" x2="871" y2="435" stroke="#3a8a2a" stroke-width="1"/>
<line x1="838" y1="408" x2="851" y2="404" stroke="#2a1a10" stroke-width="3"/>
<line x1="852" y1="403" x2="852" y2="422" stroke="#f06080" stroke-width="2"/>
<line x1="852" y1="176" x2="852" y2="403" stroke="#4f8a44" stroke-width="2"/>
<polygon points="759,213 842.2,247 748.4,257.9" fill="#a3199b" stroke="#8ef08a" stroke-width="2"/>
<path d="M815.7 96.4 A4.5 4.2 0 0 1 824.7 96.4 Z" fill="#8e2090"/>
<path d="M825.5 104.6 A4.5 4.2 0 0 1 834.5 104.6 Z" fill="#8e2090"/>
<path d="M743.9 123.6 A4.5 4.2 0 0 1 752.9 123.6 Z" fill="#8e2090"/>
<path d="M753.4 131.7 A4.5 4.2 0 0 1 762.4 131.7 Z" fill="#8e2090"/>
<path d="M695.7 141.7 A4.5 4.2 0 0 1 704.7 141.7 Z" fill="#8e2090"/>
<path d="M705.4 149.9 A4.5 4.2 0 0 1 714.4 149.9 Z" fill="#8e2090"/>
<path d="M656.6 156.7 A4.5 4.2 0 0 1 665.6 156.7 Z" fill="#8e2090"/>
<path d="M666.2 165.1 A4.5 4.2 0 0 1 675.2 165.1 Z" fill="#8e2090"/>
<path d="M616.5 175.0 A4.5 4.2 0 0 1 625.5 175.0 Z" fill="#8e2090"/>
<circle cx="601.9" cy="189.8" r="3.8" fill="#8a1a8c"/>
<path d="M606.9 199.5 A4.5 4.2 0 0 1 615.9 199.5 Z" fill="#8e2090"/>
<path d="M636.4 188.4 A4.5 4.2 0 0 1 645.4 188.4 Z" fill="#8e2090"/>
<circle cx="582.0" cy="210.0" r="4.3" fill="#7c0f80"/>
<path d="M755.7 166.2 A4.5 4.2 0 0 1 764.7 166.2 Z" fill="#8e2090"/>
<path d="M821.4 147.1 A4.5 4.2 0 0 1 830.4 147.1 Z" fill="#8e2090"/>
<path d="M695.0 185.9 A4.5 4.2 0 0 1 704.0 185.9 Z" fill="#8e2090"/>
<path d="M816.4 191.1 A4.5 4.2 0 0 1 825.4 191.1 Z" fill="#8e2090"/>
<path d="M754.1 213.3 A4.5 4.2 0 0 1 763.1 213.3 Z" fill="#8e2090"/>
<path d="M650.9 212.9 A4.5 4.2 0 0 1 659.9 212.9 Z" fill="#8e2090"/>
<circle cx="604.9" cy="229.2" r="4.3" fill="#7c0f80"/>
<path d="M615.7 224.7 A4.5 4.2 0 0 1 624.7 224.7 Z" fill="#8e2090"/>
<path d="M694.8 230.0 A4.5 4.2 0 0 1 703.8 230.0 Z" fill="#8e2090"/>
<circle cx="628.6" cy="249.1" r="4.3" fill="#7c0f80"/>
<path d="M638.7 243.8 A4.5 4.2 0 0 1 647.7 243.8 Z" fill="#8e2090"/>
<circle cx="656.2" cy="272.0" r="4.3" fill="#7c0f80"/>
<path d="M665.4 267.5 A4.5 4.2 0 0 1 674.4 267.5 Z" fill="#8e2090"/>
<path d="M838.1 248.2 A4.5 4.2 0 0 1 847.1 248.2 Z" fill="#8e2090"/>
<path d="M884.5 70.0 A4.5 4.2 0 0 1 893.5 70.0 Z" fill="#8e2090"/>
<circle cx="698.0" cy="307.0" r="4.3" fill="#7c0f80"/>
<path d="M709.1 303.7 A4.5 4.2 0 0 1 718.1 303.7 Z" fill="#8e2090"/>
<circle cx="739.0" cy="342.7" r="4.3" fill="#7c0f80"/>
<path d="M747.0 336.7 A4.5 4.2 0 0 1 756.0 336.7 Z" fill="#8e2090"/>
<circle cx="767.1" cy="366.4" r="4.3" fill="#7c0f80"/>
<path d="M777.3 361.2 A4.5 4.2 0 0 1 786.3 361.2 Z" fill="#8e2090"/>
<path d="M831.8 365.7 A4.5 4.2 0 0 1 840.8 365.7 Z" fill="#8e2090"/>
<circle cx="789.4" cy="385.1" r="4.3" fill="#7c0f80"/>
<path d="M799.6 381.3 A4.5 4.2 0 0 1 808.6 381.3 Z" fill="#8e2090"/>
<path d="M866.5 384.0 A4.5 4.2 0 0 1 875.5 384.0 Z" fill="#8e2090"/>
<circle cx="813.0" cy="405.2" r="4.3" fill="#7c0f80"/>
<path d="M836.2 396.0 A4.5 4.2 0 0 1 845.2 396.0 Z" fill="#8e2090"/>
<circle cx="851.9" cy="403.0" r="3.8" fill="#8a1a8c"/>
<circle cx="831.8" cy="421.7" r="4.3" fill="#7c0f80"/>
<path d="M857.2 411.6 A4.5 4.2 0 0 1 866.2 411.6 Z" fill="#8e2090"/>
<circle cx="856.3" cy="442.2" r="4.3" fill="#7c0f80"/>
<path d="M866.5 437.5 A4.5 4.2 0 0 1 875.5 437.5 Z" fill="#8e2090"/>
<circle cx="880.9" cy="463.2" r="4.3" fill="#7c0f80"/>
<path d="M744.5 260.0 A4.5 4.2 0 0 1 753.5 260.0 Z" fill="#8e2090"/>
</g>
</svg>
<svg style="position:absolute;left:0;top:0" width="892" height="628" viewBox="0 0 892 628">
<defs><filter id="sh2" x="-10%" y="-10%" width="130%" height="140%"><feGaussianBlur in="SourceAlpha" stdDeviation="1.8"/><feOffset dx="2" dy="3"/><feComponentTransfer><feFuncA type="linear" slope="0.45"/></feComponentTransfer><feMerge><feMergeNode/><feMergeNode in="SourceGraphic"/></feMerge></filter><clipPath id="vc2"><rect x="557" y="2" width="333" height="582"/></clipPath></defs>
<g clip-path="url(#vc2)">
<line x1="852" y1="178" x2="852" y2="74" stroke="#f01010" stroke-width="2"/>
<polygon points="852,67 848,77 856,77" fill="#f01010"/>
<line x1="852" y1="115" x2="816" y2="84" stroke="#1010e0" stroke-width="2"/>
<polygon points="812,81 822,84 817,90" fill="#1010e0"/><polygon points="820,88 828,90 824,95" fill="#1010e0"/>
<line x1="852" y1="115" x2="797" y2="135" stroke="#108010" stroke-width="2"/>
<polygon points="793,136 802,130 803,137" fill="#108010"/><polygon points="800,133 809,128 810,135" fill="#108010"/>
<circle cx="852" cy="115" r="3.5" fill="none" stroke="#8b178b" stroke-width="1"/>
<circle cx="852" cy="259" r="3.5" fill="none" stroke="#8b178b" stroke-width="1"/>
<line x1="852" y1="440" x2="852" y2="465" stroke="#f06060" stroke-width="2"/>
<circle cx="852" cy="547" r="4" fill="none" stroke="#8b178b" stroke-width="1.2"/>
<line x1="602" y1="194" x2="602" y2="331" stroke="#f0a0c8" stroke-width="2"/>
<line x1="602" y1="338" x2="602" y2="421" stroke="#6aa870" stroke-width="2"/>
<line x1="602" y1="421" x2="602" y2="481" stroke="#f01010" stroke-width="2"/>
<polygon points="602,421 598,430 606,430" fill="#f01010"/><polygon points="602,433 598,442 606,442" fill="#f01010"/>
<circle cx="602" cy="335" r="3.8" fill="none" stroke="#8b178b" stroke-width="1.1"/>
<line x1="602" y1="481" x2="566" y2="451" stroke="#1010e0" stroke-width="2"/>
<polygon points="562,447 571,450 567,455" fill="#1010e0"/>
<line x1="602" y1="481" x2="557" y2="497" stroke="#108010" stroke-width="2"/>
<circle cx="602" cy="481" r="3.8" fill="none" stroke="#8b178b" stroke-width="1.1"/>
<line x1="621" y1="521" x2="621" y2="493" stroke="#8a0a0a" stroke-width="4"/><polygon points="617,493 621,489.5 625,493 621,495" fill="#a01010"/>
<line x1="621" y1="521" x2="602.5" y2="505" stroke="#18c818" stroke-width="4"/><circle cx="602" cy="504.5" r="2.6" fill="#18c818"/>
<line x1="621" y1="521" x2="650" y2="509.5" stroke="#0808c0" stroke-width="4"/><polygon points="648,506 652.5,508 650,512.5" fill="#0808c0"/>
<text x="617" y="484" font-family="Liberation Sans" font-size="14" transform="translate(617 484) scale(0.9 1) translate(-617 -484)" fill="#ff2828">Z</text>
<text x="593" y="500" font-family="Liberation Sans" font-size="14" transform="translate(593 500) scale(0.9 1) translate(-593 -500)" fill="#28e828">Y</text>
<text x="654" y="506" font-family="Liberation Sans" font-size="14" transform="translate(654 506) scale(0.9 1) translate(-654 -506)" fill="#2828ff">X</text>
</g>
<g filter="url(#sh2)">
<path d="M763.6 237.3 C761.5 235.8 758.3 232.7 751.0 228.0 C743.7 223.3 730.2 214.8 719.7 209.0 C709.2 203.2 698.8 198.1 688.3 193.4 C677.8 188.7 667.5 184.5 657.0 180.8 C646.5 177.1 636.0 174.1 625.5 171.4 C615.0 168.7 604.7 166.1 594.2 164.5 C583.8 162.9 573.3 162.2 562.8 162.0 C552.3 161.8 538.4 163.0 531.4 163.5 C524.4 164.0 522.7 164.8 521.0 165.0" fill="none" stroke="#1c9ad6" stroke-width="4" stroke-linecap="round"/>
<polygon points="512.6,166.7 526.7,171.9 523.4,164.9 524.2,157.1" fill="#1c9ad6"/>
<path d="M599.9 320.0 C595.2 317.3 584.1 309.5 571.6 303.6 C559.1 297.7 540.3 290.2 524.6 284.7 C508.9 279.2 493.2 274.3 477.5 270.6 C461.8 266.9 446.1 264.7 430.4 262.6 C414.7 260.5 399.0 258.9 383.3 257.9 C367.6 256.9 351.9 256.4 336.2 256.5 C320.5 256.6 304.9 257.2 289.2 258.8 C273.5 260.4 253.9 263.6 242.0 265.9 C230.1 268.2 222.0 271.4 218.0 272.5" fill="none" stroke="#1c9ad6" stroke-width="4" stroke-linecap="round"/>
<polygon points="209.1,275.3 223.7,278.9 219.7,272.3 219.5,264.5" fill="#1c9ad6"/>
</g>
<g filter="url(#sh2)"><polygon points="511,568 525,568 525,558 554.5,572.6 525,587.3 525,578 511,578" fill="#a11c28"/></g>
</svg>
<div style="left:620px;top:12px;width:197px;height:52px;border:4px solid #1a9ad6;background:#fff;box-shadow:3px 4px 4px rgba(0,0,0,0.35)"><span style="left:24px;top:7px;font-size:26.5px;color:#000">Solver View</span></div>
<div style="left:556px;top:557px;width:272px;height:32px;border:3px solid #a11c28;background:transparent"><span style="left:8px;top:6px;font-size:12.5px;letter-spacing:1.2px;color:#1c1c1c">Solver Model used for FE Chasedown</span></div>
<div class="pop" style="left:606px;top:310px;width:116px;height:53px"><span style="left:3px;top:2px;font-weight:bold;font-size:12px">Select Entity</span><div style="left:2px;top:18px;width:110px;height:15px;background:#0c6ad8;border:1px solid #1a1a50"></div><span style="left:4px;top:19px;font-size:11px;color:#fff;line-height:13px">Solver Element 1185</span><div style="left:2px;top:34px;width:111px;height:1px;background:#111"></div><span style="left:3px;top:37px;font-size:11px;line-height:13px;letter-spacing:-0.3px">Solver Element 1185</span></div>
<div class="pop" style="left:755px;top:267px;width:140px;height:78px"><span style="left:3px;top:2px;font-weight:bold;font-size:12px">Select Entity</span><div style="left:2px;top:19px;width:140px;height:55px;border:1px solid #8a8a8a;border-right:none"></div><span style="left:4px;top:21px;font-size:11px;line-height:13px;letter-spacing:-0.2px">D 32 (rigid)</span><div style="left:3px;top:34px;width:136px;height:11px;background:#0c6ad8"></div><span style="left:4px;top:33px;font-size:11px;line-height:13px;color:#fff;letter-spacing:-0.25px">Solver Element 2D 10170</span><span style="left:4px;top:46px;font-size:11px;line-height:13px;letter-spacing:-0.25px">Solver Element 2D 9072</span><span style="left:4px;top:59px;font-size:11px;line-height:13px;letter-spacing:-0.25px">Solver Node 5477</span><div style="left:2px;top:71px;width:140px;height:1px;background:#111"></div><div style="left:2px;top:74px;width:140px;height:1px;background:#111"></div></div>
<svg style="position:absolute;left:603px;top:293px" width="16" height="22" viewBox="-1 -1 16 22"><path d="M0.5 0.5 L0.5 16.2 L4.2 12.8 L6.9 18.8 L9.4 17.7 L6.9 12 L11.8 11.8 Z" fill="#fff" stroke="#000" stroke-width="1.35" stroke-linejoin="miter"/></svg>
<svg style="position:absolute;left:752px;top:251px" width="16" height="22" viewBox="-1 -1 16 22"><path d="M0.5 0.5 L0.5 16.2 L4.2 12.8 L6.9 18.8 L9.4 17.7 L6.9 12 L11.8 11.8 Z" fill="#fff" stroke="#000" stroke-width="1.35" stroke-linejoin="miter"/></svg>
<div style="left:890px;top:0;width:2px;height:628px;background:#0898d8"></div>
<div style="left:0;top:626px;width:892px;height:2px;background:#0898d8"></div>
<div style="left:0;top:0;width:892px;height:2px;background:#0898d8"></div>
</body></html>
